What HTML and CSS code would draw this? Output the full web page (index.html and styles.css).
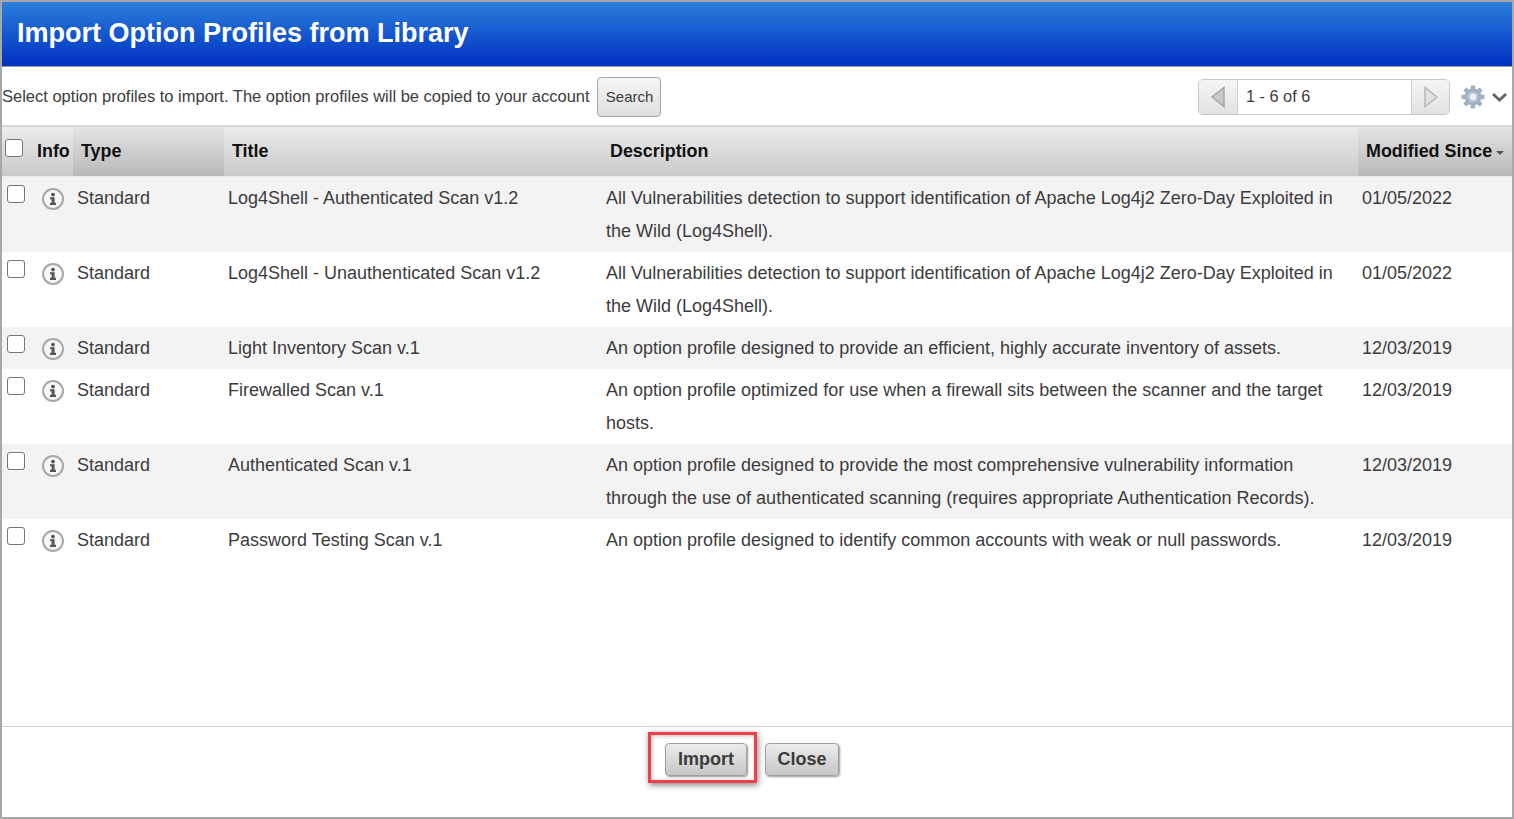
FILE: index.html
```html
<!DOCTYPE html>
<html lang="en">
<head>
<meta charset="utf-8">
<title>Import Option Profiles from Library</title>
<link rel="stylesheet" href="styles.css">
</head>
<body>
<div class="dialog">
  <header class="title-bar"><h1>Import Option Profiles from Library</h1></header>
  <div class="toolbar">
    <span class="intro">Select option profiles to import. The option profiles will be copied to your account</span>
    <button class="search-btn" type="button">Search</button>
    <div class="spacer"></div>
    <div class="pager">
      <span class="pager-btn"><svg width="16" height="22" viewBox="0 0 16 22"><path d="M14 1.500V20.500L2 11Z" fill="#c9cccc" stroke="#a4a8a8" stroke-width="1.500"/></svg></span>
      <span class="pager-count">1 - 6 of 6</span>
      <span class="pager-btn next"><svg width="16" height="22" viewBox="0 0 16 22"><path d="M2 1.500V20.500L14 11Z" fill="#e0e2e2" stroke="#b4b8b8" stroke-width="1.500"/></svg></span>
    </div>
    <div class="settings">
      <svg width="24" height="24" viewBox="0 0 24 24"><g fill="#9fb2c3"><circle cx="12" cy="12" r="8.500"/><rect x="9.800" y="0.500" width="4.400" height="23" rx="1"/><rect x="9.800" y="0.500" width="4.400" height="23" rx="1" transform="rotate(45 12 12)"/><rect x="9.800" y="0.500" width="4.400" height="23" rx="1" transform="rotate(90 12 12)"/><rect x="9.800" y="0.500" width="4.400" height="23" rx="1" transform="rotate(135 12 12)"/></g><circle cx="12" cy="12" r="5.500" fill="#b9c6d2"/><circle cx="12" cy="12" r="3.200" fill="#eef1f4"/></svg>
      <svg width="17" height="10" viewBox="0 0 17 10"><path d="M2 2L8.500 8L15 2" fill="none" stroke="#5d6468" stroke-width="2.800"/></svg>
    </div>
  </div>
  <table class="grid">
    <colgroup>
      <col class="c-check"><col class="c-info"><col class="c-type"><col class="c-title"><col class="c-desc"><col class="c-date">
    </colgroup>
    <thead>
      <tr>
        <th class="h-check"><span class="box head-box"></span></th>
        <th class="h-info">Info</th>
        <th class="sorted h-type">Type</th>
        <th class="h-title">Title</th>
        <th class="h-desc">Description</th>
        <th class="sorted h-date">Modified Since<span class="caret"></span></th>
      </tr>
    </thead>
    <tbody>
      <tr>
        <td class="t-check"><span class="box"></span></td>
        <td class="t-info"><svg class="info" width="24" height="24" viewBox="0 0 24 24"><use href="#i-info"/></svg></td>
        <td>Standard</td><td>Log4Shell - Authenticated Scan v1.2</td>
        <td>All Vulnerabilities detection to support identification of Apache Log4j2 Zero-Day Exploited in the Wild (Log4Shell).</td>
        <td>01/05/2022</td>
      </tr>
      <tr>
        <td class="t-check"><span class="box"></span></td>
        <td class="t-info"><svg class="info" width="24" height="24" viewBox="0 0 24 24"><use href="#i-info"/></svg></td>
        <td>Standard</td><td>Log4Shell - Unauthenticated Scan v1.2</td>
        <td>All Vulnerabilities detection to support identification of Apache Log4j2 Zero-Day Exploited in the Wild (Log4Shell).</td>
        <td>01/05/2022</td>
      </tr>
      <tr>
        <td class="t-check"><span class="box"></span></td>
        <td class="t-info"><svg class="info" width="24" height="24" viewBox="0 0 24 24"><use href="#i-info"/></svg></td>
        <td>Standard</td><td>Light Inventory Scan v.1</td>
        <td>An option profile designed to provide an efficient, highly accurate inventory of assets.</td>
        <td>12/03/2019</td>
      </tr>
      <tr>
        <td class="t-check"><span class="box"></span></td>
        <td class="t-info"><svg class="info" width="24" height="24" viewBox="0 0 24 24"><use href="#i-info"/></svg></td>
        <td>Standard</td><td>Firewalled Scan v.1</td>
        <td>An option profile optimized for use when a firewall sits between the scanner and the target hosts.</td>
        <td>12/03/2019</td>
      </tr>
      <tr>
        <td class="t-check"><span class="box"></span></td>
        <td class="t-info"><svg class="info" width="24" height="24" viewBox="0 0 24 24"><use href="#i-info"/></svg></td>
        <td>Standard</td><td>Authenticated Scan v.1</td>
        <td>An option profile designed to provide the most comprehensive vulnerability information through the use of authenticated scanning (requires appropriate Authentication Records).</td>
        <td>12/03/2019</td>
      </tr>
      <tr>
        <td class="t-check"><span class="box"></span></td>
        <td class="t-info"><svg class="info" width="24" height="24" viewBox="0 0 24 24"><use href="#i-info"/></svg></td>
        <td>Standard</td><td>Password Testing Scan v.1</td>
        <td>An option profile designed to identify common accounts with weak or null passwords.</td>
        <td>12/03/2019</td>
      </tr>
    </tbody>
  </table>
  <div class="grow"></div>
  <footer class="actions">
    <span class="highlight"><button class="btn" type="button">Import</button></span>
    <button class="btn" type="button">Close</button>
  </footer>
</div>
<svg class="defs" width="0" height="0">
  <symbol id="i-info" viewBox="0 0 24 24">
    <circle cx="12" cy="12" r="10" fill="#f7f7f7" stroke="#a8a8a8" stroke-width="2"/>
    <circle cx="12" cy="7.600" r="1.900" fill="#555"/>
    <path d="M9 10.300H13.600V15.800H15V18H9V15.800H10.600V12.300H9Z" fill="#555"/>
  </symbol>
</svg>
</body>
</html>
```

FILE: styles.css
```css
* { box-sizing: border-box; }
html, body { margin: 0; height: 100%; }
body { background: #fff; font-family: "Liberation Sans", Arial, sans-serif; color: #3c3c3c; overflow: hidden; }
.defs { position: absolute; }
.dialog {
  width: 1514px; height: 819px; display: flex; flex-direction: column;
  border: 2px solid #a8a8a8; background: #fff;
}
.title-bar {
  height: 65px; flex: none; display: flex; align-items: center; padding-left: 15px;
  background: linear-gradient(#2a7fdc, #0030c0); border-bottom: 1px solid #9a9a9a;
}
.title-bar h1 { margin: 0 0 2px; font-size: 27px; font-weight: bold; color: #fff; }
.toolbar {
  height: 60px; flex: none; display: flex; align-items: center;
  border-bottom: 2px solid #d9d9d9; padding-top: 1px;
}
.intro { font-size: 16.500px; color: #3c3c3c; }
.search-btn {
  margin-left: 7px; width: 64px; height: 40px; padding: 0 0 0 2px; border: 1px solid #a6a6a6; border-radius: 4px;
  background: linear-gradient(#f6f6f6, #dedede); font: 15px "Liberation Sans", Arial, sans-serif; color: #3c3c3c;
}
.spacer { flex: 1; }
.pager {
  display: flex; height: 36px; width: 252px; border: 1px solid #c8c8c8; border-radius: 5px; overflow: hidden;
}
.pager-btn {
  width: 39px; flex: none; display: flex; align-items: center; justify-content: center;
  background: linear-gradient(#f6f6f6, #e2e2e2); border-right: 1px solid #cfcfcf;
}
.pager-btn.next { width: 38px; border-right: 0; border-left: 1px solid #cfcfcf; }
.pager-count { flex: 1; font-size: 16.300px; padding: 7px 0 0 8px; color: #3c3c3c; }
.settings { width: 62px; flex: none; display: flex; align-items: center; gap: 6px; padding: 0 0 0 11px; }
.grid { width: 1510px; table-layout: fixed; border-collapse: collapse; flex: none; }
.c-check { width: 29px; } .c-info { width: 42px; } .c-type { width: 151px; }
.c-title { width: 378px; } .c-desc { width: 756px; } .c-date { width: 154px; }
thead tr { height: 49px; background: linear-gradient(#ececec, #c9c9c9); }
th { text-align: left; font-size: 17.900px; font-weight: bold; color: #111; padding: 0 0 0 8px; white-space: nowrap; border-bottom: 1px solid #ececec; }
th.sorted { background: linear-gradient(#e4e4e4, #b9b9b9); }
.h-check { padding: 0 0 1px 3px; }
.h-info { padding-left: 6px; }
.h-title { padding-left: 8px; }
.caret {
  display: inline-block; margin-left: 4px; vertical-align: 2px;
  border: 4.500px solid transparent; border-top: 4.500px solid #555; border-bottom: 0;
}
td { font-size: 18px; line-height: 33px; padding: 5px 20px 4px 4px; vertical-align: top; color: #3c3c3c; }
tbody tr:nth-child(odd) { background: #f3f3f3; }
tbody tr { height: 42px; }
.t-check { padding: 8px 0 0 5px; line-height: 0; }
.t-info { padding: 10px 0 0 10px; line-height: 0; }
.box {
  display: inline-block; width: 18px; height: 18px; border: 1.500px solid #767676; border-radius: 3px; background: #fff;
}
.grow { flex: 1; }
.actions {
  height: 91px; flex: none; border-top: 1px solid #d0d0d0; display: flex; justify-content: center; align-items: flex-start; gap: 18px;
  padding-top: 16px; padding-right: 10px;
}
.highlight {
  display: block; margin: -11px -10px 0 -17px; padding: 8px 7px 0 14px; height: 51px;
  border: 3px solid #ef3f49; box-shadow: 1px 2px 6px rgba(0,0,0,0.5), inset 1px 1px 4px rgba(0,0,0,0.25);
}
.btn {
  width: 82px; height: 33px; padding: 0; border: 1px solid #a0a0a0; border-radius: 4px;
  background: linear-gradient(#ececec, #c6c6c6); font: bold 18px "Liberation Sans", Arial, sans-serif; color: #3c3c3c;
  box-shadow: 1px 1px 2px rgba(0,0,0,0.4);
}
.actions > .btn { width: 74px; }
```
